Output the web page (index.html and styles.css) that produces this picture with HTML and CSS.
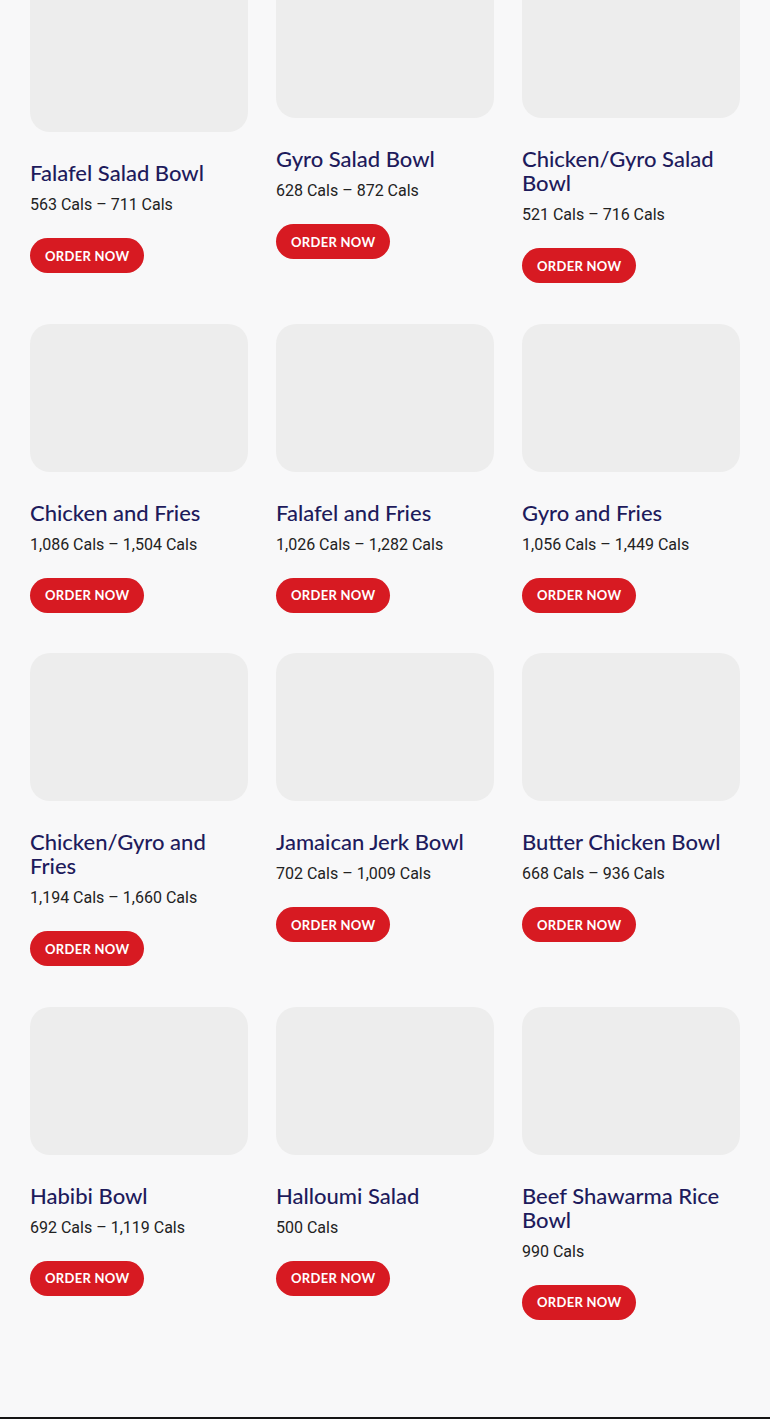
FILE: index.html
```html
<!DOCTYPE html>
<html lang="en"><head>
<meta charset="utf-8">
<meta name="viewport" content="width=device-width, initial-scale=1">
<title>Bowls &amp; Fries</title>
<link rel="stylesheet" href="styles.css">
</head><body>

<main class="menu-grid">
	<div class="menu-card">
		<div class="menu-card__image menu-card__image--tall"></div>
		<h3 class="menu-card__title">Falafel Salad Bowl</h3>
		<p class="menu-card__cals">563 Cals – 711 Cals</p>
		<a class="order-btn" href="#">Order Now</a>
	</div>
	<div class="menu-card">
		<div class="menu-card__image"></div>
		<h3 class="menu-card__title">Gyro Salad Bowl</h3>
		<p class="menu-card__cals">628 Cals – 872 Cals</p>
		<a class="order-btn" href="#">Order Now</a>
	</div>
	<div class="menu-card">
		<div class="menu-card__image"></div>
		<h3 class="menu-card__title">Chicken/Gyro Salad Bowl</h3>
		<p class="menu-card__cals">521 Cals – 716 Cals</p>
		<a class="order-btn" href="#">Order Now</a>
	</div>

	<div class="menu-card">
		<div class="menu-card__image"></div>
		<h3 class="menu-card__title">Chicken and Fries</h3>
		<p class="menu-card__cals">1,086 Cals – 1,504 Cals</p>
		<a class="order-btn" href="#">Order Now</a>
	</div>
	<div class="menu-card">
		<div class="menu-card__image"></div>
		<h3 class="menu-card__title">Falafel and Fries</h3>
		<p class="menu-card__cals">1,026 Cals – 1,282 Cals</p>
		<a class="order-btn" href="#">Order Now</a>
	</div>
	<div class="menu-card">
		<div class="menu-card__image"></div>
		<h3 class="menu-card__title">Gyro and Fries</h3>
		<p class="menu-card__cals">1,056 Cals – 1,449 Cals</p>
		<a class="order-btn" href="#">Order Now</a>
	</div>

	<div class="menu-card">
		<div class="menu-card__image"></div>
		<h3 class="menu-card__title">Chicken/Gyro and Fries</h3>
		<p class="menu-card__cals">1,194 Cals – 1,660 Cals</p>
		<a class="order-btn" href="#">Order Now</a>
	</div>
	<div class="menu-card">
		<div class="menu-card__image"></div>
		<h3 class="menu-card__title">Jamaican Jerk Bowl</h3>
		<p class="menu-card__cals">702 Cals – 1,009 Cals</p>
		<a class="order-btn" href="#">Order Now</a>
	</div>
	<div class="menu-card">
		<div class="menu-card__image"></div>
		<h3 class="menu-card__title">Butter Chicken Bowl</h3>
		<p class="menu-card__cals">668 Cals – 936 Cals</p>
		<a class="order-btn" href="#">Order Now</a>
	</div>

	<div class="menu-card">
		<div class="menu-card__image"></div>
		<h3 class="menu-card__title">Habibi Bowl</h3>
		<p class="menu-card__cals">692 Cals – 1,119 Cals</p>
		<a class="order-btn" href="#">Order Now</a>
	</div>
	<div class="menu-card">
		<div class="menu-card__image"></div>
		<h3 class="menu-card__title">Halloumi Salad</h3>
		<p class="menu-card__cals">500 Cals</p>
		<a class="order-btn" href="#">Order Now</a>
	</div>
	<div class="menu-card">
		<div class="menu-card__image"></div>
		<h3 class="menu-card__title">Beef Shawarma Rice Bowl</h3>
		<p class="menu-card__cals">990 Cals</p>
		<a class="order-btn" href="#">Order Now</a>
	</div>
</main>

<footer class="site-footer"></footer>

</body></html>
```

FILE: styles.css
```css
html, body {
	margin: 0;
	padding: 0;
}

body {
	background: #f8f8f9;
	font-family: Roboto, "Liberation Sans", sans-serif;
	color: #222;
}

.menu-grid {
	display: grid;
	grid-template-columns: repeat(3, 1fr);
	column-gap: 28px;
	row-gap: 40.5px;
	align-items: start;
	margin-top: -30px;
	padding: 0 30px 97.5px;
}

.menu-card {
	display: flex;
	flex-direction: column;
	align-items: flex-start;
}

.menu-card__image {
	width: 100%;
	height: 148px;
	border-radius: 20px;
	background: #ededed;
	margin-bottom: 29px;
}

.menu-card__image--tall {
	height: 162px;
}

.menu-card__title {
	margin: 0;
	font-family: Lato, "Open Sans", sans-serif;
	font-size: 22px;
	font-weight: 500;
	line-height: 24px;
	color: #1e1b5c;
}

.menu-card__cals {
	margin: 8px 0 0;
	font-size: 16px;
	line-height: 24px;
	color: #222;
}

.order-btn {
	margin-top: 21px;
	display: inline-flex;
	align-items: center;
	height: 35px;
	padding: 0 15px;
	border-radius: 18px;
	background: #d71a22;
	color: #fff;
	font-family: Lato, "Open Sans", sans-serif;
	font-size: 13px;
	font-weight: 700;
	letter-spacing: 0.3px;
	text-transform: uppercase;
	text-decoration: none;
}

.site-footer {
	height: 40px;
	background: #151515;
}
```
